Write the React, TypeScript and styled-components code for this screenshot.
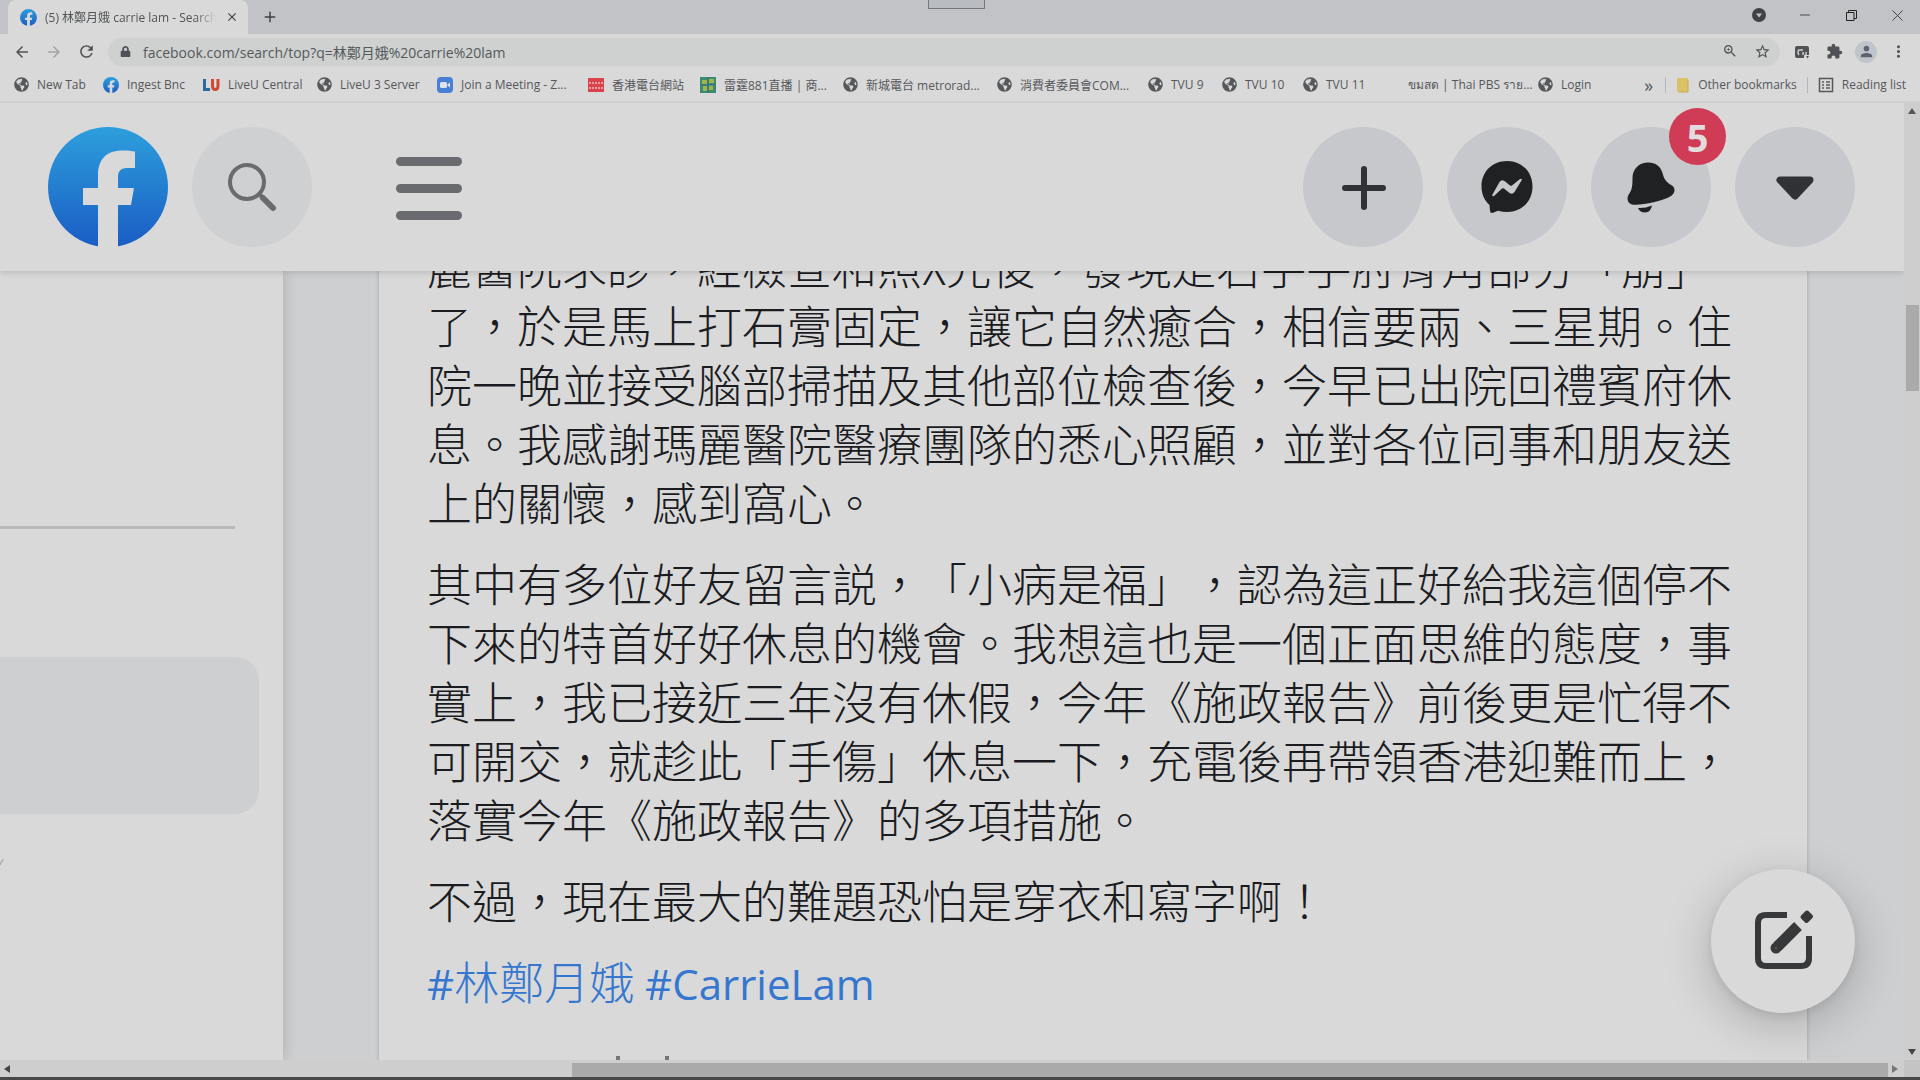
import React from 'react';
import styled, { createGlobalStyle } from 'styled-components';
import { FaGlobeAmericas, FaLock } from 'react-icons/fa';
import {
  MdArrowBack,
  MdArrowForward,
  MdRefresh,
  MdStarBorder,
  MdExtension,
  MdPerson,
  MdMoreVert,
  MdClose,
  MdAdd,
  MdZoomIn,
} from 'react-icons/md';

const GlobalStyle = createGlobalStyle`
  * { box-sizing: border-box; }
  body {
    margin: 0;
    overflow: hidden;
    font-family: "Open Sans", "Noto Sans CJK TC", sans-serif;
    background: #d9d9d9;
    color: #1b1c1f;
  }
  button { border: 0; padding: 0; margin: 0; background: none; font: inherit; color: inherit; }
  a { color: inherit; text-decoration: none; }
  svg { display: block; flex: none; }
`;

const Window = styled.div`
  height: 100vh;
  display: flex;
  flex-direction: column;
  border-bottom: 3px solid #484848;
  overflow: hidden;
`;

/* Browser frame */

const TabStrip = styled.div`
  position: relative;
  display: flex;
  flex: none;
  height: 34px;
  padding-left: 8px;
  background: #c2c3c7;
`;

const Notch = styled.div`
  position: absolute;
  top: 0;
  left: 50%;
  width: 57px;
  height: 9px;
  margin-left: -32px;
  background: #b9bdc1;
  border: 1px solid #74787c;
  border-top: 0;
`;

const Tab = styled.div`
  display: flex;
  align-items: center;
  gap: 8px;
  width: 240px;
  padding: 0 8px 0 12px;
  border-radius: 8px 8px 0 0;
  background: #d9d9d9;
  font-size: 12px;
  color: #505356;
`;

const TabTitle = styled.span`
  flex: 1;
  overflow: hidden;
  white-space: nowrap;
  mask-image: linear-gradient(90deg, #000 88%, transparent);
`;

const SmallButton = styled.button`
  display: flex;
  align-items: center;
  justify-content: center;
  width: 16px;
  height: 16px;
  color: #3e4144;
`;

const NewTabButton = styled(SmallButton)`
  width: 44px;
  height: 34px;
`;

const WindowControls = styled.div`
  display: flex;
  align-items: center;
  height: 30px;
  margin-left: auto;
`;

const ControlButton = styled(SmallButton)`
  width: 46px;
  height: 28px;
`;

const Toolbar = styled.div`
  display: flex;
  align-items: center;
  flex: none;
  height: 35px;
  padding: 0 14px;
  gap: 16px;
  color: #505356;
`;

const ToolButton = styled(SmallButton)<{ $muted?: boolean }>`
  color: ${(p) => (p.$muted ? '#a2a4a6' : '#505356')};
`;

const Address = styled.label`
  display: flex;
  align-items: center;
  flex: 1;
  gap: 12px;
  height: 28px;
  margin: 0 -2px 0 -2px;
  padding: 0 9px 0 12px;
  border-radius: 14px;
  background: #ced1cf;
`;

const AddressInput = styled.input`
  flex: 1;
  min-width: 0;
  border: 0;
  padding: 0;
  outline: 0;
  background: none;
  font: 14px "Open Sans", "Noto Sans CJK TC", sans-serif;
  color: #55595c;
`;

const AddressIcons = styled.span`
  display: flex;
  gap: 16px;
`;

const Avatar = styled(SmallButton)`
  width: 22px;
  height: 22px;
  margin: 0 -3px;
  border-radius: 50%;
  background: #c0c4cb;
  color: #5b6270;
`;

const Bookmarks = styled.nav`
  display: flex;
  align-items: center;
  flex: none;
  height: 34px;
  padding: 0 14px 1px;
  border-bottom: 2px solid #cfcfcf;
  font-size: 12px;
  color: #55585b;
  white-space: nowrap;
`;

const Bookmark = styled.a<{ $width?: number }>`
  display: flex;
  align-items: center;
  gap: 8px;
  width: ${(p) => (p.$width ? `${p.$width}px` : 'auto')};
`;

const BookmarkTail = styled.div`
  display: flex;
  align-items: center;
  gap: 10px;
  margin-left: auto;
`;

const Overflow = styled.button`
  margin-right: 2px;
  font-size: 18px;
  line-height: 16px;
`;

const Separator = styled.span`
  width: 1px;
  height: 16px;
  background: #b4b6b8;
`;

const Blank = styled.span`
  width: 16px;
`;

/* Page viewport */

const Viewport = styled.div`
  display: grid;
  grid-template-columns: minmax(0, 1fr) 16px;
  grid-template-rows: minmax(0, 1fr) 17px;
  flex: 1;
  min-height: 0;
`;

const Page = styled.div`
  position: relative;
  display: flex;
  flex-direction: column;
  overflow: hidden;
  background: #cdcfd1;
`;

const Header = styled.header`
  position: relative;
  z-index: 1;
  display: flex;
  align-items: center;
  flex: none;
  gap: 24px;
  height: 168px;
  padding: 0 49px 0 48px;
  background: #d9d9d9;
  box-shadow: 0 2px 6px rgba(0, 0, 0, 0.14);
`;

const RoundButton = styled.button<{ $tone?: string }>`
  position: relative;
  width: 120px;
  height: 120px;
  border-radius: 50%;
  background: ${(p) => p.$tone || '#c6c8cc'};
`;

const MenuButton = styled.button`
  display: flex;
  flex-direction: column;
  gap: 18px;
  width: 66px;
  padding-top: 2px;
  margin-left: 60px;
`;

const MenuBar = styled.span`
  height: 9px;
  border-radius: 5px;
  background: #696b6e;
`;

const HeaderActions = styled.div`
  display: flex;
  gap: 24px;
  margin-left: auto;
`;

const Badge = styled.span`
  position: absolute;
  top: -19px;
  right: -15px;
  display: flex;
  align-items: center;
  justify-content: center;
  width: 57px;
  height: 57px;
  border-radius: 50%;
  background: #d03b55;
  color: #e2dcdd;
  font-size: 38px;
  font-weight: 700;
`;

const Body = styled.div`
  display: flex;
  flex: 1;
  min-height: 0;
`;

const Sidebar = styled.aside`
  flex: none;
  width: 283px;
  padding-top: 255px;
  background: #d9d9d9;
  box-shadow: 2px 0 12px rgba(0, 0, 0, 0.14);
`;

const Rule = styled.hr`
  height: 3px;
  margin: 0 48px 128px 0;
  border: 0;
  background: #b9b9b9;
`;

const SelectedRow = styled.div`
  height: 157px;
  margin: 0 24px 44px 0;
  border-radius: 0 24px 24px 0;
  background: #cecfd1;
`;

const Feed = styled.main`
  flex: 1;
  min-width: 0;
  padding: 0 97px 0 96px;
`;

const Post = styled.article`
  margin-top: -35px;
  padding: 0 48px 48px;
  background: #d9d9d9;
  box-shadow: 0 0 4px rgba(0, 0, 0, 0.22);
  font: 300 45px/59px "Noto Sans CJK TC", sans-serif;
  text-spacing-trim: space-all;
`;

const Paragraph = styled.p`
  margin: 0 0 22px;
  white-space: pre-line;
`;

const TagLine = styled(Paragraph)`
  font-family: "Open Sans", "Noto Sans CJK TC", sans-serif;
  font-size: 42px;
  color: #3576cf;
`;

const Tag = styled.a`
  font-weight: 400;
`;

const TagHan = styled.span`
  font: 300 45px/59px "Noto Sans CJK TC", sans-serif;
`;

const PostFooter = styled.div`
  display: flex;
  gap: 45px;
  padding: 21px 0 0 189px;
`;

const Dot = styled.span`
  width: 4px;
  height: 4px;
  background: #777;
`;

const Compose = styled.button`
  position: absolute;
  z-index: 2;
  right: 49px;
  bottom: 47px;
  width: 144px;
  height: 144px;
  border-radius: 50%;
  background: #d9d9d9;
  box-shadow: 0 12px 48px rgba(0, 0, 0, 0.22), 0 3px 9px rgba(0, 0, 0, 0.08);
`;

const VerticalBar = styled.div`
  display: flex;
  flex-direction: column;
  align-items: center;
  padding: 5px 0;
  background: #cecece;
`;

const VerticalThumb = styled.div`
  width: 13px;
  height: 86px;
  margin: 191px 0 auto;
  background: #aaa;
`;

const HorizontalBar = styled.div`
  display: flex;
  align-items: center;
  padding: 0 6px 0 4px;
  background: #cecece;
`;

const HorizontalThumb = styled.div`
  width: 69.5%;
  height: 14px;
  margin: 3px 4px 0 auto;
  background: #aaa;
`;

const Corner = styled.div`
  background: #c4c4c4;
`;

const FacebookLogo = ({ size }: { size: number }) => (
  <svg width={size} height={size} viewBox="0 0 120 120">
    <defs>
      <linearGradient id={`fb${size}`} x1="0" y1="0" x2="0" y2="1">
        <stop offset="0" stopColor="#2d9fdc" />
        <stop offset="1" stopColor="#1a5cc4" />
      </linearGradient>
    </defs>
    <circle cx="60" cy="60" r="60" fill={`url(#fb${size})`} />
    <path
      d="M50 121V78H35V61H50V48C50 32 59 23.5 74 23.5C80 23.5 84 24 87 24.500V41H79C72 41 70 45 70 50V61H86L83 78H70V121Z"
      fill="#d9d9d9"
    />
  </svg>
);

const Globe = () => <FaGlobeAmericas size={15} color="#56595c" />;

const LiveU = () => (
  <svg width="18" height="16" viewBox="0 0 18 16" fill="none" strokeWidth="3">
    <path d="M2.500 2V12.500H8" stroke="#2d6a9c" />
    <path d="M10.500 2V9Q10.500 12.500 13.300 12.500Q16 12.500 16 9V2" stroke="#cf4a35" />
  </svg>
);

const Meeting = () => (
  <svg width="16" height="16" viewBox="0 0 16 16">
    <rect width="16" height="16" rx="4" fill="#4a7fd6" />
    <rect x="3" y="5" width="7" height="6" rx="1.500" fill="#dde3ea" />
    <path d="M10.500 7.500L13 5.500V10.500L10.500 8.500Z" fill="#dde3ea" />
  </svg>
);

const RedSite = () => (
  <svg width="16" height="14" viewBox="0 0 16 14">
    <rect width="16" height="14" fill="#d8434c" />
    <path d="M1 5H15M1 10H15" stroke="#e6b9bb" strokeWidth="1.500" strokeDasharray="2 1" />
  </svg>
);

const GreenSite = () => (
  <svg width="16" height="16" viewBox="0 0 16 16">
    <rect width="16" height="16" fill="#3d8a72" />
    <path d="M2 3H7V7H2ZM9 2H14V6H9ZM3 9H7V14H3ZM9 8H13V13H9Z" fill="#a3b545" />
    <path d="M0 8H16M8 0V16" stroke="#2f6f8f" strokeWidth="1" />
  </svg>
);

const bookmarks: { label: string; width: number; icon: React.ReactNode }[] = [
  { label: 'New Tab', width: 89, icon: <Globe /> },
  { label: 'Ingest Bnc', width: 99, icon: <FacebookLogo size={16} /> },
  { label: 'LiveU Central', width: 115, icon: <LiveU /> },
  { label: 'LiveU 3 Server', width: 120, icon: <Globe /> },
  { label: 'Join a Meeting - Z...', width: 151, icon: <Meeting /> },
  { label: '香港電台網站', width: 112, icon: <RedSite /> },
  { label: '雷霆881直播 | 商...', width: 143, icon: <GreenSite /> },
  { label: '新城電台 metrorad...', width: 154, icon: <Globe /> },
  { label: '消費者委員會COM...', width: 151, icon: <Globe /> },
  { label: 'TVU 9', width: 74, icon: <Globe /> },
  { label: 'TVU 10', width: 81, icon: <Globe /> },
  { label: 'TVU 11', width: 81, icon: <Globe /> },
  { label: 'ขมสด | Thai PBS ราย…', width: 154, icon: <Blank /> },
  { label: 'Login', width: 60, icon: <Globe /> },
];

const paragraphs = [
  '麗醫院求診，經檢查和照X光後，發現是右手手肘骨角部分「崩」\n了，於是馬上打石膏固定，讓它自然癒合，相信要兩、三星期。住院一晚並接受腦部掃描及其他部位檢查後，今早已出院回禮賓府休息。我感謝瑪麗醫院醫療團隊的悉心照顧，並對各位同事和朋友送上的關懷，感到窩心。',
  '其中有多位好友留言説，「小病是福」，認為這正好給我這個停不下來的特首好好休息的機會。我想這也是一個正面思維的態度，事實上，我已接近三年沒有休假，今年《施政報告》前後更是忙得不可開交，就趁此「手傷」休息一下，充電後再帶領香港迎難而上，落實今年《施政報告》的多項措施。',
  '不過，現在最大的難題恐怕是穿衣和寫字啊！',
];

const BrowserFrame = () => (
  <>
    <TabStrip>
      <Tab>
        <FacebookLogo size={17} />
        <TabTitle>(5) 林鄭月娥 carrie lam - Search</TabTitle>
        <SmallButton aria-label="Close tab"><MdClose size={14} /></SmallButton>
      </Tab>
      <NewTabButton aria-label="New tab"><MdAdd size={18} /></NewTabButton>
      <Notch />
      <WindowControls>
        <ControlButton aria-label="Tab search">
          <svg width="14" height="14" viewBox="0 0 14 14">
            <circle cx="7" cy="7" r="7" fill="#404346" />
            <path d="M4 5.500H10L7 9.500Z" fill="#c2c3c7" />
          </svg>
        </ControlButton>
        <ControlButton aria-label="Minimize">
          <svg width="10" height="10" viewBox="0 0 10 10"><path d="M0 5H10" stroke="#85878a" strokeWidth="2" /></svg>
        </ControlButton>
        <ControlButton aria-label="Restore">
          <svg width="11" height="11" viewBox="0 0 11 11" fill="none" stroke="#222">
            <path d="M.5 2.500H8V10.500H.5ZM2.500 2.500V.5H10.500V8.500H8" />
          </svg>
        </ControlButton>
        <ControlButton aria-label="Close window">
          <svg width="11" height="11" viewBox="0 0 11 11"><path d="M.5.5L10.500 10.500M10.500.5L.5 10.500" stroke="#444" /></svg>
        </ControlButton>
      </WindowControls>
    </TabStrip>
    <Toolbar>
      <ToolButton aria-label="Back"><MdArrowBack size={18} /></ToolButton>
      <ToolButton aria-label="Forward" $muted><MdArrowForward size={18} /></ToolButton>
      <ToolButton aria-label="Reload"><MdRefresh size={19} /></ToolButton>
      <Address>
        <FaLock size={11} aria-label="Secure" />
        <AddressInput aria-label="Address" defaultValue="facebook.com/search/top?q=林鄭月娥%20carrie%20lam" />
        <AddressIcons>
          <MdZoomIn size={16} />
          <MdStarBorder size={17} />
        </AddressIcons>
      </Address>
      <ToolButton aria-label="Capture">
        <svg width="16" height="16" viewBox="0 0 16 16">
          <rect x="1" y="2" width="14" height="12" rx="2" fill="#505356" />
          <path d="M9 6H5Q4 6 4 8T5 11M9 8V11M12 8V14" stroke="#d0d0d0" strokeWidth="1.500" fill="none" />
          <path d="M10 11H16V16H10Z" fill="#d9d9d9" />
          <path d="M12 12H15L13.500 14.500Z" fill="#505356" />
        </svg>
      </ToolButton>
      <ToolButton aria-label="Extensions"><MdExtension size={17} /></ToolButton>
      <Avatar aria-label="Profile"><MdPerson size={17} /></Avatar>
      <ToolButton aria-label="More"><MdMoreVert size={19} /></ToolButton>
    </Toolbar>
    <Bookmarks>
      {bookmarks.map((b) => (
        <Bookmark key={b.label} href="#" $width={b.width}>
          {b.icon}
          {b.label}
        </Bookmark>
      ))}
      <BookmarkTail>
        <Overflow aria-label="More bookmarks">»</Overflow>
        <Separator />
        <Bookmark href="#">
          <svg width="14" height="16" viewBox="0 0 14 16">
            <path d="M1 1H12V15H1Z" fill="#dcc266" />
            <path d="M12 3V15H3" stroke="#c9ab4c" fill="none" />
          </svg>
          Other bookmarks
        </Bookmark>
        <Separator />
        <Bookmark href="#">
          <svg width="16" height="16" viewBox="0 0 16 16" stroke="#55585b" fill="none" strokeWidth="1.500">
            <path d="M1.500 1.500H14.500V14.500H1.500ZM4 5H6M4 8H6M4 11H6M8 5H12M8 8H12M8 11H12" />
          </svg>
          Reading list
        </Bookmark>
      </BookmarkTail>
    </Bookmarks>
  </>
);

const PageHeader = () => (
  <Header>
    <a href="#" aria-label="Facebook"><FacebookLogo size={120} /></a>
    <RoundButton $tone="#ced0d2" aria-label="Search">
      <svg width="120" height="120" viewBox="0 0 120 120" fill="none" stroke="#696b6e">
        <circle cx="55" cy="55" r="17" strokeWidth="4" />
        <path d="M67 67L71 71" strokeWidth="4" />
        <path d="M71 71L81 81" strokeWidth="6" strokeLinecap="round" />
      </svg>
    </RoundButton>
    <MenuButton aria-label="Menu">
      <MenuBar />
      <MenuBar />
      <MenuBar />
    </MenuButton>
    <HeaderActions>
      <RoundButton aria-label="Create">
        <svg width="120" height="120" viewBox="0 0 120 120">
          <path d="M61 42V80M42 61H80" stroke="#303236" strokeWidth="6" strokeLinecap="round" />
        </svg>
      </RoundButton>
      <RoundButton aria-label="Messenger">
        <svg width="120" height="120" viewBox="0 0 120 120">
          <path
            d="M60 34C45 34 34.500 45 34.500 59.500C34.500 67 37.500 73.500 42.500 78L43 84Q43.500 86.500 46 85.700L51 83.700C54 84.600 57 85 60 85C75 85 85.500 74 85.500 59.500C85.500 45 75 34 60 34Z"
            fill="#202122"
          />
          <path
            d="M45.500 67.500L52.500 55Q54.500 52 57.500 54L63 58.500Q64 59 65 58.500L73 52Q75.500 51 74.500 53.500L67.500 65Q65.500 68 62.500 66L57 61.500Q56 61 55 61.500L47 69Q44.500 70 45.500 67.500Z"
            fill="#c6c8cc"
          />
        </svg>
      </RoundButton>
      <RoundButton aria-label="Notifications">
        <svg width="120" height="120" viewBox="0 0 120 120" fill="#202122">
          <path d="M56 35.500C47 36 41.500 43 41.500 51C41.500 59 41 63 38 67C35.500 70.500 36 76 41 77.500C50 78.500 70 75 80 69C84.500 66 84.500 61 81 58.500C75 55 73 52 71.500 46C69.500 39 64 35 56 35.500Z" />
          <path d="M47 81Q54 81.500 61 78.500Q60 85 54 85.500Q49 85.500 47 81Z" />
        </svg>
        <Badge>5</Badge>
      </RoundButton>
      <RoundButton aria-label="Account">
        <svg width="120" height="120" viewBox="0 0 120 120">
          <path d="M45 53H75L60 69Z" fill="#303236" stroke="#303236" strokeWidth="7" strokeLinejoin="round" />
        </svg>
      </RoundButton>
    </HeaderActions>
  </Header>
);

export default function App() {
  return (
    <Window>
      <GlobalStyle />
      <BrowserFrame />
      <Viewport>
        <Page>
          <PageHeader />
          <Body>
            <Sidebar>
              <Rule />
              <SelectedRow />
              <svg width="4" height="8" viewBox="0 0 4 8"><path d="M0 7L3 1" stroke="#b0b0b0" strokeWidth="1.500" /></svg>
            </Sidebar>
            <Feed>
              <Post>
                {paragraphs.map((text) => (
                  <Paragraph key={text}>{text}</Paragraph>
                ))}
                <TagLine>
                  <Tag href="#">#<TagHan>林鄭月娥</TagHan></Tag> <Tag href="#">#CarrieLam</Tag>
                </TagLine>
                <PostFooter>
                  <Dot />
                  <Dot />
                </PostFooter>
              </Post>
            </Feed>
          </Body>
          <Compose aria-label="New message">
            <svg width="144" height="144" viewBox="0 0 144 144" fill="none" stroke="#36383a">
              <path d="M76 46H55Q47 46 47 54V89Q47 97 55 97H90Q98 97 98 89V67" strokeWidth="6" />
              <path d="M66 78L87 57" strokeWidth="11" />
              <circle cx="65" cy="79" r="2.500" strokeWidth="6" />
              <path d="M91.500 48L96 43.500L100 47.500L95.500 52Z" fill="#36383a" strokeWidth="4" strokeLinejoin="round" />
            </svg>
          </Compose>
        </Page>
        <VerticalBar>
          <svg width="8" height="6" viewBox="0 0 8 6"><path d="M4 0L8 6H0Z" fill="#555" /></svg>
          <VerticalThumb />
          <svg width="8" height="6" viewBox="0 0 8 6"><path d="M4 6L8 0H0Z" fill="#444" /></svg>
        </VerticalBar>
        <HorizontalBar>
          <svg width="6" height="8" viewBox="0 0 6 8"><path d="M0 4L6 0V8Z" fill="#444" /></svg>
          <HorizontalThumb />
          <svg width="6" height="8" viewBox="0 0 6 8"><path d="M6 4L0 0V8Z" fill="#777" /></svg>
        </HorizontalBar>
        <Corner />
      </Viewport>
    </Window>
  );
}
